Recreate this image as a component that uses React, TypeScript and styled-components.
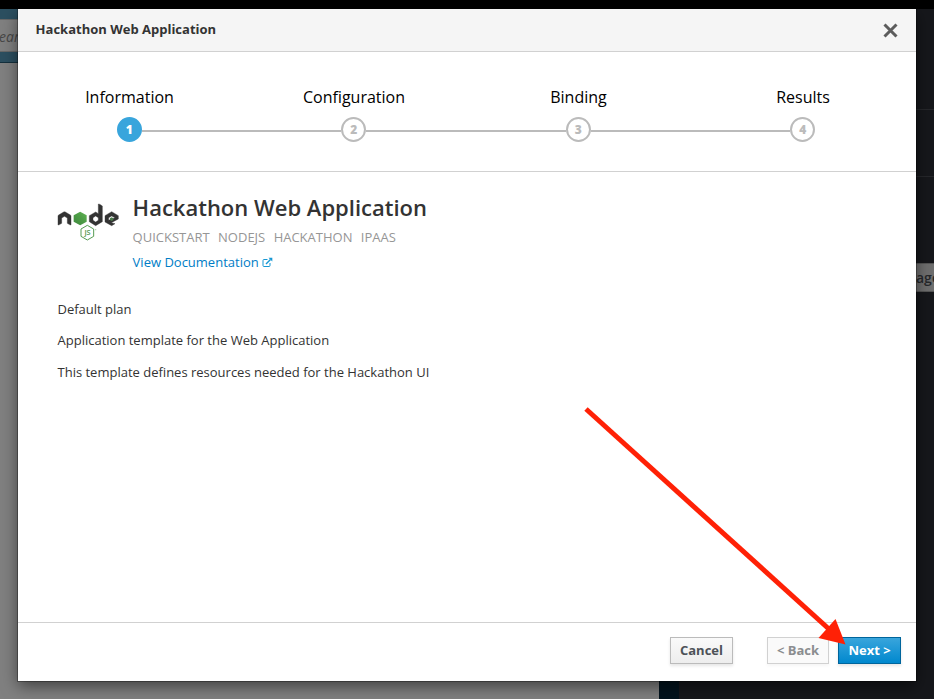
import React from "react";
import styled, { createGlobalStyle } from "styled-components";

const GlobalStyle = createGlobalStyle`
  * { box-sizing: border-box; }
  html, body { margin: 0; padding: 0; overflow: hidden; }
  body { font-family: "Open Sans", "Noto Sans", sans-serif; font-size: 13px; color: #333; }
`;

const Page = styled.div`
  position: relative;
  width: 934px;
  height: 699px;
  overflow: hidden;
  border-top: 9px solid #000;
  background: #16171b;
`;

const Backdrop = styled.div`
  display: grid;
  grid-template-columns: 659px 20px 1fr;
  height: 690px;
`;

const Catalog = styled.div`
  background: #808080;
`;

const SearchBand = styled.div`
  height: 54px;
  padding: 10px 0 11px;
  background: #2c4f60;
  border-bottom: 1px solid #14303d;
`;

const SearchField = styled.div`
  height: 33px;
  border: 1px solid #686868;
  border-left: 0;
  background: #808080;
  color: #474747;
  font-size: 14px;
  font-style: italic;
  line-height: 34px;
  text-indent: -1px;
`;

const Gutter = styled.div`
  background: #02131d;
`;

const SidePanel = styled.div`
  display: flex;
  flex-direction: column;
`;

const SideRow = styled.div<{ $height: number }>`
  height: ${(p) => p.$height}px;
  border-bottom: 1px solid #26272b;
`;

const SideButton = styled.div`
  height: 29px;
  margin-top: 86px;
  padding-left: 237px;
  border-top: 1px solid #555;
  border-bottom: 1px solid #555;
  background: #6f6f6f;
  color: #26282b;
  font-size: 14px;
  font-weight: 600;
  line-height: 28px;
  white-space: nowrap;
`;

const Modal = styled.section`
  position: absolute;
  top: 0;
  left: 18px;
  display: flex;
  flex-direction: column;
  width: 898px;
  height: 672px;
  background: #fff;
  box-shadow: 0 0 0 1px rgba(0, 0, 0, 0.3), 0 5px 15px rgba(0, 0, 0, 0.5);
`;

const Header = styled.header`
  display: flex;
  align-items: center;
  justify-content: space-between;
  height: 43px;
  padding: 0 18px;
  border-bottom: 1px solid #d1d1d1;
  background: #f5f5f5;
`;

const Title = styled.h4`
  margin: 0 0 0 -0.400px;
  padding-bottom: 3px;
  font-size: 13px;
  font-weight: 700;
  line-height: 20px;
`;

const CloseButton = styled.button`
  display: flex;
  padding: 0;
  border: 0;
  background: none;
`;

const Steps = styled.ol`
  display: grid;
  grid-template-columns: repeat(4, 1fr);
  height: 120px;
  margin: 0;
  padding: 35px 0 0;
  border-bottom: 1px solid #d1d1d1;
  list-style: none;
`;

const Step = styled.li`
  display: flex;
  flex-direction: column;
  align-items: center;
  margin: 0 0.75px 0 -0.75px;
`;

const StepLabel = styled.span`
  color: #000;
  font-size: 16px;
  line-height: 20px;
`;

const StepTrack = styled.div`
  display: flex;
  align-items: center;
  width: 100%;
  height: 25px;
  margin: 10px 0 0 -0.4px;
`;

const Connector = styled.span<{ $visible: boolean }>`
  flex: 1;
  height: 2px;
  margin-top: 2px;
  background: ${(p) => (p.$visible ? "#bbb" : "transparent")};
`;

const StepNumber = styled.span<{ $active: boolean }>`
  width: 25px;
  height: 25px;
  border: 2px solid ${(p) => (p.$active ? "#39a5dc" : "#bbb")};
  border-radius: 50%;
  background: ${(p) => (p.$active ? "#39a5dc" : "#fff")};
  color: ${(p) => (p.$active ? "#fff" : "#bbb")};
  font-size: 12px;
  font-weight: 800;
  line-height: 21px;
  text-align: center;
`;

const Content = styled.main`
  flex: 1;
  padding: 21px 39px 0 39.500px;
`;

const Service = styled.div`
  display: flex;
  gap: 13.600px;
`;

const Logo = styled.svg`
  width: 62px;
  height: 38px;
  margin: 10px 0 0 -0.500px;
  flex: none;
`;

const Heading = styled.h2`
  margin: 0;
  font-size: 22px;
  font-weight: 600;
  line-height: 28px;
`;

const Tags = styled.div`
  display: flex;
  gap: 8.400px;
  margin-top: 7px;
  color: #969696;
  font-size: 13px;
  line-height: 18px;
`;

const DocLink = styled.a`
  display: flex;
  align-items: center;
  gap: 3px;
  margin-top: 7px;
  color: #007dc6;
  line-height: 18px;
`;

const Paragraph = styled.p`
  margin: 0;
  line-height: 18px;
`;

const Description = styled.div`
  display: grid;
  grid-template-rows: 31px 32px 18px;
  padding-top: 29px;
`;

const Footer = styled.footer`
  display: flex;
  height: 59px;
  padding: 14px 15px 0;
  justify-content: flex-end;
  border-top: 1px solid #d1d1d1;
`;

const Button = styled.button<{ $kind: "default" | "disabled" | "primary"; $width: number; $gap?: number }>`
  width: ${(p) => p.$width}px;
  height: 27px;
  margin: 0 0 0 ${(p) => p.$gap ?? 0}px;
  padding: 0;
  border: 1px solid
    ${(p) => ({ default: "#bbb", disabled: "#d1d1d1", primary: "#00659c" })[p.$kind]};
  background: ${(p) =>
    ({
      default: "linear-gradient(#fafafa, #ededed)",
      disabled: "#fafafa",
      primary: "linear-gradient(#39a5dc, #0088ce)",
    })[p.$kind]};
  box-shadow: 0 2px 3px rgba(3, 3, 3, ${(p) => (p.$kind === "disabled" ? 0.04 : 0.1)});
  color: ${(p) => ({ default: "#4d5258", disabled: "#8b8d8f", primary: "#fff" })[p.$kind]};
  font-family: inherit;
  font-size: 13px;
  font-weight: 700;
  line-height: 25px;
`;

const Arrow = styled.svg`
  position: absolute;
  left: 580px;
  top: 391px;
  width: 270px;
  height: 250px;
  pointer-events: none;
`;

const steps = ["Information", "Configuration", "Binding", "Results"];
const tags = ["QUICKSTART", "NODEJS", "HACKATHON", "IPAAS"];

function NodeLogo() {
  return (
    <Logo viewBox="51 39 186 114">
      <defs>
        <linearGradient id="leaf" x1="0" y1="1" x2="1" y2="0">
          <stop offset="0" stopColor="#3f873f" />
          <stop offset="0.6" stopColor="#4fa047" />
          <stop offset="1" stopColor="#64b256" />
        </linearGradient>
      </defs>
      <g fill="#333" stroke="#333" strokeWidth="1.200" fillRule="evenodd">
        <path d="M54 105V78Q54 76 56 75L71 66Q73.500 65 76 66L91 75Q93 76 93 78V105Q91 106 82 100V84L73.500 79L65 84V100Q56 106 54 105Z" />
        <path d="M148 77L167 66L175 71V42Q178 41 187 48V95L167 107L148 95ZM167 78L159 83V91L167 96L175 91V83Z" />
        <path d="M195 77L215 65L235 77V87L214 98L225 101L215 107L195 96ZM215 78L206 83V91L225 83Z" />
      </g>
      <path d="M215 82L220 85V90L215 93L210 90V85Z" fill="#4b7a4c" />
      <path d="M120.500 65L140 76V95L120.500 106L101 95V76Z" fill="url(#leaf)" />
      <path
        d="M142 106L161 117V139L142 150L123 139V117Z"
        fill="none"
        stroke="#559c53"
        strokeWidth="3"
        strokeLinejoin="round"
      />
      <text x="142.500" y="136" textAnchor="middle" fill="#4b964a" fontSize="22" fontWeight="600" fontFamily="Open Sans">
        JS
      </text>
      <circle cx="167" cy="119" r="2" fill="#a9cda8" />
    </Logo>
  );
}

export default function App() {
  return (
    <>
      <GlobalStyle />
      <Page>
        <Backdrop>
          <Catalog>
            <SearchBand>
              <SearchField>earch</SearchField>
            </SearchBand>
          </Catalog>
          <Gutter />
          <SidePanel>
            <SideRow $height={101} />
            <SideRow $height={67} />
            <SideButton>age</SideButton>
          </SidePanel>
        </Backdrop>

        <Modal>
          <Header>
            <Title>Hackathon Web Application</Title>
            <CloseButton aria-label="Close">
              <svg width="15" height="15" viewBox="0 0 15 15">
                <path d="M1.500 1.500L13.500 13.500M13.500 1.500L1.500 13.500" stroke="#5c5c5c" strokeWidth="3" />
              </svg>
            </CloseButton>
          </Header>
          <Steps>
            {steps.map((label, i) => (
              <Step key={label}>
                <StepLabel>{label}</StepLabel>
                <StepTrack>
                  <Connector $visible={i > 0} />
                  <StepNumber $active={i === 0}>{i + 1}</StepNumber>
                  <Connector $visible={i < steps.length - 1} />
                </StepTrack>
              </Step>
            ))}
          </Steps>
          <Content>
            <Service>
              <NodeLogo />
              <div>
                <Heading>Hackathon Web Application</Heading>
                <Tags>
                  {tags.map((tag) => (
                    <span key={tag}>{tag}</span>
                  ))}
                </Tags>
                <DocLink>
                  View Documentation
                  <svg width="11" height="11" viewBox="0 0 11 11" fill="none" stroke="#1797d3">
                    <path d="M5.500 2.500H2Q1 2.500 1 3.500V8.500Q1 9.500 2 9.500H7Q8 9.500 8 8.500V6" />
                    <path d="M4 7L8.500 2.500" strokeWidth="1.400" />
                    <path d="M6.500 0.700H10.300V4.500Z" fill="#1797d3" stroke="none" />
                  </svg>
                </DocLink>
              </div>
            </Service>
            <Description>
              <Paragraph>Default plan</Paragraph>
              <Paragraph>Application template for the Web Application</Paragraph>
              <Paragraph>This template defines resources needed for the Hackathon UI</Paragraph>
            </Description>
          </Content>
          <Footer>
            <Button $kind="default" $width={63}>Cancel</Button>
            <Button $kind="disabled" $width={62} $gap={34}>&lt; Back</Button>
            <Button $kind="primary" $width={63} $gap={9}>Next &gt;</Button>
          </Footer>
        </Modal>

        <Arrow viewBox="580 400 270 250">
          <path d="M586 409L830 630" stroke="#ff2106" strokeWidth="5" />
          <path d="M845.500 644.500L835.500 619L818.500 638Z" fill="#ff2106" />
        </Arrow>
      </Page>
    </>
  );
}
